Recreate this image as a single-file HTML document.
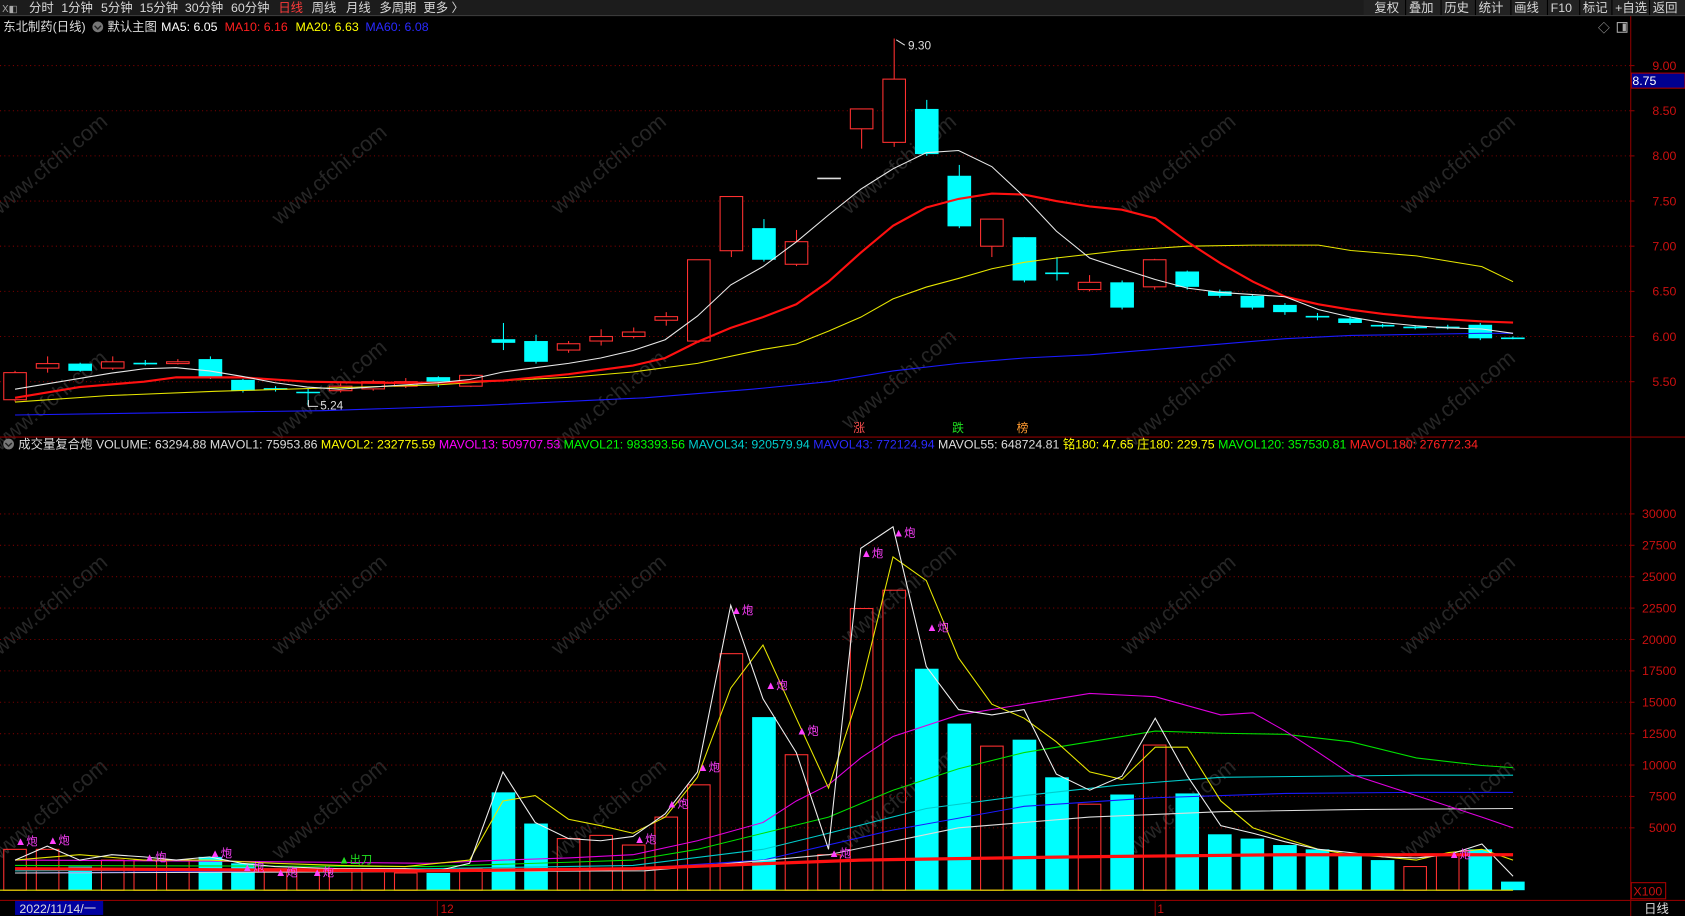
<!DOCTYPE html>
<html><head><meta charset="utf-8">
<style>
html,body{margin:0;padding:0;background:#000;width:1685px;height:916px;overflow:hidden}
svg{display:block}
text{font-family:"Liberation Sans","Noto Sans CJK SC",sans-serif}
</style></head>
<body>
<svg id="s" width="1685" height="916" viewBox="0 0 1568 852" preserveAspectRatio="none" xmlns="http://www.w3.org/2000/svg">
<rect width="1568" height="852" fill="#000"/>
<g id="wm" font-size="20" fill="#262626"></g>
<rect x="0" y="0" width="1568" height="14" fill="#1c1c1c"/>
<line x1="0" y1="14.5" x2="1568" y2="14.5" stroke="#3a3a3a"/>
<g font-size="11.5" fill="#d8d8d8">
<text x="2" y="11" font-size="9" fill="#aaa">X◧</text>
<text x="27" y="11">分时</text><text x="57" y="11">1分钟</text><text x="94" y="11">5分钟</text><text x="130" y="11">15分钟</text><text x="172" y="11">30分钟</text><text x="215" y="11">60分钟</text>
<text x="259" y="11" fill="#ff3b3b">日线</text><text x="290" y="11">周线</text><text x="322" y="11">月线</text><text x="353" y="11">多周期</text><text x="394" y="11">更多 〉</text>
</g>
<rect x="1269" y="0" width="299" height="14" fill="#222"/>
<g font-size="11.5">
<text x="3" y="29" fill="#ddd">东北制药(日线)</text>
<circle cx="91" cy="25" r="5" fill="#777"/><path d="M88 24 L91 27 L94 24" stroke="#222" stroke-width="1.3" fill="none"/>
<text x="100" y="29" fill="#ddd">默认主图</text>
<text x="150" y="29" fill="#fff">MA5: 6.05</text>
<text x="209" y="29" fill="#ff2020">MA10: 6.16</text>
<text x="275" y="29" fill="#ffff00">MA20: 6.63</text>
<text x="340" y="29" fill="#2a2aff">MA60: 6.08</text>
</g>
<text x="1487" y="30" font-size="11" fill="#aaa">◇</text>
<rect x="1505" y="21" width="9" height="9" fill="none" stroke="#aaa"/><rect x="1510" y="22" width="3" height="7" fill="#aaa"/>
<g id="g"></g>
</svg>
<script>
const NS="http://www.w3.org/2000/svg",g=document.getElementById('g'),wm=document.getElementById('wm');
function el(t,a,txt,p){const e=document.createElementNS(NS,t);for(const k in a)e.setAttribute(k,a[k]);if(txt!=null)e.textContent=txt;(p||g).appendChild(e);return e;}
[[0,200],[260,210],[520,200],[790,200],[1050,200],[1310,200],[0,420],[260,410],[520,420],[790,400],[1050,420],[1310,420],[0,610],[260,610],[520,610],[790,600],[1050,610],[1310,610],[0,800],[260,800],[520,800],[790,790],[1050,800],[1310,800]].forEach(p=>el('text',{x:p[0],y:p[1],transform:`rotate(-40 ${p[0]} ${p[1]})`},'www.cfchi.com',wm));
const btns=["复权","叠加","历史","统计","画线","F10","标记","+自选","返回"];
const bx=[1279,1311,1344,1376,1409,1443,1473,1503,1538];
btns.forEach((b,i)=>{el('text',{x:bx[i],y:11,'font-size':11.5,fill:'#d8d8d8'},b);if(i)el('line',{x1:bx[i]-3,y1:0,x2:bx[i]-3,y2:14,stroke:'#000'});});
const AX=1517;
el('line',{x1:AX+.5,y1:15,x2:AX+.5,y2:852,stroke:'#8b0000'});
el('line',{x1:0,y1:406.5,x2:1568,y2:406.5,stroke:'#8b0000'});
el('line',{x1:0,y1:837.5,x2:1568,y2:837.5,stroke:'#8b0000'});
const py=p=>61+(9-p)*84;
[9,8.5,8,7.5,7,6.5,6,5.5].forEach(p=>{const y=py(p);el('line',{x1:0,y1:y,x2:AX,y2:y,stroke:'#7a0000','stroke-dasharray':'1 3'});el('line',{x1:AX,y1:y,x2:AX+4,y2:y,stroke:'#8b0000'});el('text',{x:1560,y:y+4,'font-size':11.5,fill:'#cc1010','text-anchor':'end'},p.toFixed(2));});
el('rect',{x:AX+1,y:68,width:50,height:14,fill:'#000090',stroke:'#a00'});
el('text',{x:AX+2,y:79,'font-size':11.5,fill:'#fff'},'8.75');
const vy=v=>770-(v-5000)*0.01168;
for(let v=5000;v<=30000;v+=2500){const y=vy(v);el('line',{x1:0,y1:y,x2:AX,y2:y,stroke:'#7a0000','stroke-dasharray':'1 3'});el('line',{x1:AX,y1:y,x2:AX+4,y2:y,stroke:'#8b0000'});el('text',{x:1560,y:y+4,'font-size':11.5,fill:'#cc1010','text-anchor':'end'},v);}
el('rect',{x:AX+1,y:821,width:32,height:15,fill:'none',stroke:'#a00'});
el('text',{x:AX+3,y:833,'font-size':11.5,fill:'#cc1010'},'X100');
const X=i=>14+i*30.3;
const C=[[5.30,5.60,5.62,5.28],[5.65,5.70,5.78,5.60],[5.70,5.62,5.71,5.61],[5.65,5.72,5.78,5.63],[5.70,5.70,5.74,5.68],[5.70,5.72,5.75,5.69],[5.75,5.55,5.78,5.53],[5.52,5.40,5.53,5.38],[5.42,5.42,5.45,5.39],[5.38,5.38,5.42,5.24],[5.40,5.45,5.48,5.38],[5.42,5.50,5.52,5.40],[5.45,5.50,5.54,5.43],[5.55,5.48,5.56,5.44],[5.45,5.57,5.58,5.44],[5.97,5.93,6.15,5.85],[5.95,5.72,6.02,5.70],[5.85,5.92,5.95,5.82],[5.95,6.00,6.08,5.90],[6.00,6.05,6.10,5.98],[6.18,6.22,6.27,6.12],[5.95,6.85,6.85,5.93],[6.95,7.55,7.55,6.88],[7.20,6.85,7.30,6.83],[6.80,7.05,7.18,6.78],[7.75,7.75,7.75,7.75],[8.30,8.52,8.52,8.08],[8.15,8.85,9.30,8.10],[8.52,8.02,8.62,8.00],[7.78,7.22,7.90,7.20],[7.00,7.30,7.30,6.88],[7.10,6.62,7.10,6.60],[6.70,6.70,6.88,6.62],[6.52,6.60,6.68,6.50],[6.60,6.32,6.62,6.30],[6.55,6.85,6.86,6.52],[6.72,6.55,6.73,6.52],[6.50,6.45,6.52,6.43],[6.45,6.32,6.47,6.30],[6.35,6.27,6.37,6.24],[6.22,6.22,6.26,6.18],[6.20,6.15,6.22,6.13],[6.12,6.12,6.14,6.10],[6.10,6.10,6.12,6.08],[6.10,6.10,6.13,6.08],[6.13,5.98,6.15,5.96],[5.98,5.98,6.00,5.97]];
const W=22;
C.forEach((c,i)=>{const x=X(i),[o,cl,h,l]=c;const up=cl>o,eq=Math.abs(cl-o)<0.005;const col=eq?(i==25?'#ddd':'#00ffff'):(up?'#ff3030':'#00ffff');
el('line',{x1:x,y1:py(h),x2:x,y2:py(l),stroke:col});
if(eq){el('line',{x1:x-W/2,y1:py(o),x2:x+W/2,y2:py(o),stroke:col,'stroke-width':1.5});return;}
const t=py(Math.max(o,cl)),b=py(Math.min(o,cl));
if(up)el('rect',{x:x-W/2+.5,y:t,width:W-1,height:b-t,fill:'#000',stroke:col});else el('rect',{x:x-W/2,y:t,width:W,height:b-t,fill:col});});
el('text',{x:845,y:46,'font-size':11,fill:'#ddd'},'9.30');el('path',{d:'M834 37 L842 42',stroke:'#ddd',fill:'none'});
el('text',{x:298,y:381,'font-size':11,fill:'#ddd'},'5.24');el('path',{d:'M287 372 L287 378 L296 378',stroke:'#ddd',fill:'none'});
function pl(pts,col,w){el('polyline',{points:pts.map(p=>p.join(',')).join(' '),fill:'none',stroke:col,'stroke-width':w||1});}
pl([[14,386],[150,384],[300,382],[450,377],[600,370],[700,362],[771,355],[831,345],[892,338],[953,333],[1014,330],[1075,325],[1136,320],[1196,315],[1257,312],[1318,311],[1379,310],[1408,310]],'#1a1aff');
pl([[14,374],[100,368],[200,364],[300,361],[407,358],[468,354],[529,351],[589,346],[649,338],[710,325],[741,320],[771,308],[801,295],[831,278],[862,267],[892,259],[923,250],[953,244],[983,240],[1044,233],[1105,229],[1166,228],[1227,228],[1257,233],[1318,238],[1379,248],[1408,262]],'#e6e600');
pl([[14,370],[74,360],[134,355],[164,351],[225,351],[286,355],[346,356],[407,356],[468,354],[529,348],[589,340],[619,333],[649,318],[680,305],[710,295],[741,283],[771,262],[801,235],[831,210],[862,193],[892,185],[923,180],[953,181],[983,187],[1014,192],[1044,195],[1075,203],[1105,225],[1136,245],[1166,262],[1196,276],[1227,283],[1257,288],[1287,292],[1318,295],[1348,297],[1379,299],[1408,300]],'#ff1010',2);
pl([[14,362],[44,357],[74,352],[104,347],[134,343],[164,342],[195,345],[225,350],[256,356],[286,360],[316,362],[346,360],[377,358],[407,356],[437,353],[468,346],[498,342],[529,338],[559,333],[589,326],[619,316],[649,294],[680,265],[710,248],[741,225],[771,200],[801,176],[831,157],[862,142],[892,140],[923,155],[953,183],[983,215],[1014,240],[1044,250],[1075,260],[1105,268],[1136,272],[1166,274],[1196,276],[1227,288],[1257,295],[1287,300],[1318,303],[1348,305],[1379,306],[1408,310]],'#e8e8e8');
[['涨',800,'#ff5050'],['跌',892,'#20e020'],['榜',952,'#ff9a30']].forEach(a=>el('text',{x:a[1]-6,y:402,'font-size':11,fill:a[2]},a[0]));
el('circle',{cx:8,cy:413,r:5,fill:'#777'});el('path',{d:'M5 412 L8 415 L11 412',stroke:'#222','stroke-width':1.3,fill:'none'});
const H=[['成交量复合炮 VOLUME: 63294.88 MAVOL1: 75953.86 ','#ddd'],['MAVOL2: 232775.59 ','#ffff00'],['MAVOL13: 509707.53 ','#ff00ff'],['MAVOL21: 983393.56 ','#00ff00'],['MAVOL34: 920579.94 ','#00cccc'],['MAVOL43: 772124.94 ','#2a2aff'],['MAVOL55: 648724.81 ','#ddd'],['铭180: 47.65 ','#ffff00'],['庄180: 229.75 ','#ffff00'],['MAVOL120: 357530.81 ','#00ff00'],['MAVOL180: 276772.34','#ff2020']];
const t=el('text',{x:17,y:417,'font-size':11.5});
H.forEach(h=>{const s=document.createElementNS(NS,'tspan');s.setAttribute('fill',h[1]);s.textContent=h[0];t.appendChild(s);});
const V=[['r',790],['r',790],['c',806],['r',800],['r',800],['r',800],['c',797],['c',803],['r',808],['r',808],['r',808],['r',808],['r',812],['c',812],['r',808],['c',737],['c',766],['r',780],['r',777],['r',786],['r',760],['r',730],['r',608],['c',667],['r',702],['r',795],['r',566],['r',549],['c',622],['c',673],['r',694],['c',688],['c',723],['r',748],['c',739],['r',693],['c',738],['c',776],['c',780],['c',786],['c',790],['c',795],['c',800],['r',806],['r',795],['c',790],['c',820]];
V.forEach((v,i)=>{const x=X(i);if(v[0]=='r')el('rect',{x:x-W/2+.5,y:v[1],width:W-1,height:828-v[1],fill:'none',stroke:'#ff3030'});else el('rect',{x:x-W/2,y:v[1],width:W,height:828-v[1],fill:'#00ffff'});});
pl([[14,812],[589,808],[710,800],[831,772],[953,750],[1075,742],[1196,738],[1318,737],[1408,737]],'#1a1aff');
pl([[14,812],[600,810],[771,795],[892,770],[1014,760],[1136,755],[1257,753],[1408,752]],'#ddd');
pl([[14,810],[400,808],[589,805],[710,790],[771,775],[862,752],[953,740],[1044,730],[1136,723],[1227,722],[1318,721],[1408,721]],'#00cccc');
pl([[14,805],[400,806],[529,802],[589,800],[649,790],[710,775],[771,760],[831,735],[892,715],[953,700],[1014,690],[1075,680],[1136,682],[1196,683],[1257,690],[1318,705],[1379,712],[1408,714]],'#00e000');
pl([[14,800],[200,801],[400,803],[468,800],[529,798],[589,795],[649,782],[710,765],[741,745],[771,730],[801,705],[831,685],[892,665],[953,655],[1014,645],[1075,648],[1136,665],[1166,663],[1196,680],[1227,700],[1257,720],[1318,740],[1379,760],[1408,770]],'#e000e0');
pl([[14,800],[74,795],[134,800],[195,800],[256,803],[316,805],[377,806],[437,800],[468,745],[498,740],[529,762],[559,768],[589,775],[619,760],[649,723],[680,640],[710,600],[741,668],[771,733],[801,640],[831,518],[862,540],[892,612],[923,655],[953,668],[983,690],[1014,718],[1044,725],[1075,695],[1105,695],[1136,745],[1166,770],[1196,780],[1227,790],[1257,795],[1287,797],[1318,800],[1348,793],[1379,790],[1408,800]],'#e6e600');
pl([[14,800],[44,787],[74,800],[104,795],[134,797],[164,800],[195,797],[225,803],[256,806],[286,807],[316,808],[346,808],[377,808],[407,810],[437,803],[468,718],[498,765],[529,780],[559,782],[589,778],[619,757],[649,718],[680,563],[710,650],[741,700],[771,790],[801,510],[831,490],[862,620],[892,660],[923,665],[953,660],[983,720],[1014,735],[1044,722],[1075,668],[1105,722],[1136,768],[1166,775],[1196,783],[1227,790],[1257,793],[1287,797],[1318,798],[1348,795],[1379,785],[1408,815]],'#eee');
pl([[14,808],[400,810],[589,808],[800,800],[1000,797],[1200,795],[1408,795]],'#ff1010',3);
el('line',{x1:0,y1:828,x2:1408,y2:828,stroke:'#e6e600'});
[[14,782],[44,781],[134,797],[195,793],[225,806],[256,811],[290,811],[590,780],[620,747],[649,713],[680,567],[712,637],[741,679],[771,793],[801,514],[831,495],[862,583],[1348,794]].forEach(p=>el('text',{x:p[0],y:p[1]+4,'font-size':10.5,fill:'#ff40ff'},'▲炮'));
el('text',{x:315,y:803,'font-size':10.5,fill:'#20e020'},'▲出刀');
el('rect',{x:14,y:838,width:82,height:13,fill:'#0000a0'});
el('text',{x:18,y:849,'font-size':11.5,fill:'#ddd'},'2022/11/14/一');
el('line',{x1:407,y1:838,x2:407,y2:852,stroke:'#8b0000'});el('text',{x:410,y:849,'font-size':11,fill:'#cc1010'},'12');
el('line',{x1:1075,y1:838,x2:1075,y2:852,stroke:'#8b0000'});el('text',{x:1077,y:849,'font-size':11,fill:'#cc1010'},'1');
el('text',{x:1530,y:849,'font-size':11.5,fill:'#ddd'},'日线');
</script>
</body></html>
